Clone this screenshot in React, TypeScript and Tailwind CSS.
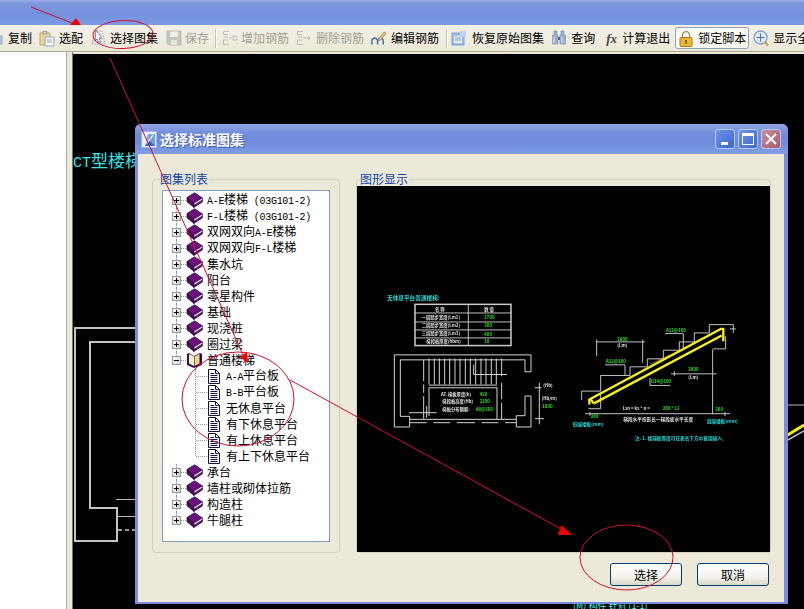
import React from "react";

const CJK = '"Noto Sans CJK SC"';

function Mixed({ text }: { text: string }) {
  const parts = text.split(/([\x00-\x7f]+)/).filter(Boolean);
  return (
    <span className="whitespace-nowrap">
      {parts.map((p, i) =>
        /^[\x00-\x7f]+$/.test(p) ? (
          <span key={i} className="font-['Liberation_Mono',monospace] text-[10px] tracking-[-0.3px] text-black">{p}</span>
        ) : (
          <span key={i}>{p}</span>
        )
      )}
    </span>
  );
}

function Book() {
  return (
    <svg width="17" height="16" viewBox="0 0 17 16">
      <path d="M1 5.5 L8.5 0.8 L16.5 6 L8 11.2 Z" fill="#6e0f80" stroke="#20062a" strokeWidth="0.7" />
      <path d="M1 5.5 L8 11.2 L8 15.5 L1 9.8 Z" fill="#4e0a5c" stroke="#20062a" strokeWidth="0.7" />
      <path d="M8 11.2 L16.5 6 L16.5 8 L8 13.4 Z" fill="#f4f4f4" stroke="#20062a" strokeWidth="0.5" />
      <path d="M8 13.4 L16.5 8 L16.5 10 L8 15.5 Z" fill="#6e0f80" stroke="#20062a" strokeWidth="0.5" />
    </svg>
  );
}

function OpenBook() {
  return (
    <svg width="17" height="17" viewBox="0 0 17 17">
      <path d="M1 2 L3 1 L8 4 L14 1 L16 2 L16 13 L8 16 L1 13 Z" fill="#3a0a50" />
      <path d="M3 2 L8 4.5 L8 14 L3 11.5 Z" fill="#f6f3c8" />
      <path d="M13.5 2 L8.6 4.5 L8.6 14 L13.5 11.5 Z" fill="#e8d98a" />
    </svg>
  );
}

function Doc() {
  return (
    <svg width="13" height="15" viewBox="0 0 13 15">
      <path d="M1.5 0.5 H8.5 L12.5 4.5 V14.5 H1.5 Z" fill="#fff" stroke="#101030" />
      <path d="M8.5 0.5 V4.5 H12.5" fill="none" stroke="#101030" />
      <path d="M3.5 4.5 H7 M3.5 6.5 H10.5 M3.5 8.5 H10.5 M3.5 10.5 H10.5 M3.5 12.5 H10.5" stroke="#101060" />
    </svg>
  );
}

function Expander({ minus }: { minus?: boolean }) {
  return (
    <span className="absolute left-[9px] top-[4px] z-10 flex h-[9px] w-[9px] items-center justify-center border border-[#8c9aa8] bg-[linear-gradient(135deg,#ffffff,#d8d4c8)]">
      <span className="absolute h-px w-[5px] bg-black" />
      {!minus && <span className="absolute h-[5px] w-px bg-black" />}
    </span>
  );
}

type Pos = "first" | "mid" | "last" | "open";

function TopRow({ text, pos, open }: { text: string; pos: Pos; open?: boolean }) {
  return (
    <div className="flex h-4 items-center text-[12px] leading-4 text-black">
      <div className="relative h-4 w-[23px] shrink-0">
        <span
          className={
            pos === "first"
              ? "absolute left-[13px] top-[8px] h-2 border-l border-dotted border-[#999]"
              : pos === "last" || pos === "open"
                ? "absolute left-[13px] top-0 h-2 border-l border-dotted border-[#999]"
                : "absolute left-[13px] top-0 h-4 border-l border-dotted border-[#999]"
          }
        />
        <span className="absolute left-[18px] top-[8px] w-[5px] border-t border-dotted border-[#999]" />
        <Expander minus={open} />
      </div>
      <div className="flex w-[17px] shrink-0 items-center justify-center">{open ? <OpenBook /> : <Book />}</div>
      <div className="ml-1">
        <Mixed text={text} />
      </div>
    </div>
  );
}

function ChildRow({ text, last }: { text: string; last?: boolean }) {
  return (
    <div className="flex h-4 items-center text-[12px] leading-4 text-black">
      <div className="relative h-4 w-[44px] shrink-0">
        <span className={last ? "absolute left-[32px] top-0 h-2 border-l border-dotted border-[#999]" : "absolute left-[32px] top-0 h-4 border-l border-dotted border-[#999]"} />
        <span className="absolute left-[33px] top-[8px] w-[11px] border-t border-dotted border-[#999]" />
      </div>
      <div className="flex w-[13px] shrink-0 items-center">
        <Doc />
      </div>
      <div className="ml-[6px]">
        <Mixed text={text} />
      </div>
    </div>
  );
}

/* ---------- toolbar icons ---------- */
const IcoCopy = () => (
  <svg width="16" height="16" viewBox="0 0 16 16">
    <path d="M8 6 H14 V14 H8 Z" fill="#dfe8f5" stroke="#7d9cc8" />
    <path d="M10 8 H13 M10 10 H13 M10 12 H13" stroke="#7d9cc8" />
  </svg>
);
const IcoPaste = () => (
  <svg width="16" height="17" viewBox="0 0 16 17">
    <path d="M1 3 H11 V15 H1 Z" fill="#ecd594" stroke="#c0a560" />
    <path d="M4 1.5 H8 V4 H4 Z" fill="#dcdfe6" stroke="#999" />
    <path d="M6 7 H15 V16 H6 Z" fill="#f8f9fc" stroke="#97a3bb" />
    <path d="M8 10 H13 M8 12 H13" stroke="#97a3bb" />
  </svg>
);
const IcoSelect = () => (
  <svg width="16" height="18" viewBox="0 0 16 18">
    <path d="M1 15 L4 2 H11 L14 15 Z" fill="#f0f1f5" stroke="#a0a7b8" strokeDasharray="1.5 1" />
    <path d="M3 10 H12 M4 6 H11 M2.5 13 H13" stroke="#a8b2c9" strokeDasharray="1.5 1" />
    <path d="M5 1 L11 9 L8 9 L10 13 L8 14 L6 10 L4 12 Z" fill="#fff" stroke="#667" strokeWidth="0.8" />
  </svg>
);
const IcoSave = () => (
  <svg width="16" height="16" viewBox="0 0 16 16">
    <path d="M1 1 H15 V15 H3 L1 13 Z" fill="#c6c6bf" stroke="#b8b8b0" />
    <path d="M4 1.5 H12 V7 H4 Z" fill="#f0f0ea" />
    <path d="M5 10 H11 V15 H5 Z" fill="#e6e6e0" />
  </svg>
);
const IcoRebar = ({ minus }: { minus?: boolean }) => (
  <svg width="16" height="16" viewBox="0 0 16 16">
    <path d="M7 1.5 H1.5 V4.5 H6 M1.5 7 H6 M6 10 H1.5 V14.5 H7" fill="none" stroke="#bbb" />
    {minus ? (
      <path d="M7 8 H14 M12 6.5 L14 8 L12 9.5" fill="none" stroke="#b4b4b4" />
    ) : (
      <path d="M7 8 H10 M11 6 H15 V10 H11 Z" fill="none" stroke="#bbb" />
    )}
  </svg>
);
const IcoEdit = () => (
  <svg width="17" height="16" viewBox="0 0 17 16">
    <path d="M1 15 V10 Q4 6 7 10 V15 M7 15 V10 Q10 6 13 10 V15" fill="none" stroke="#3c68b8" strokeWidth="1.5" />
    <path d="M8 9 L14 1.5 L16 3 L10 10.5 L7.5 11 Z" fill="#eac078" stroke="#8f7645" strokeWidth="0.7" />
  </svg>
);
const IcoRestore = () => (
  <svg width="16" height="16" viewBox="0 0 16 16">
    <path d="M1 3 H13 V15 H1 Z" fill="#9dbce6" stroke="#7f9fd0" />
    <path d="M3 6 H11 V13 H3 Z" fill="#e6eef9" />
    <path d="M4 8 H10 M4 10 H10" stroke="#7a9bd0" />
    <path d="M9 1 H15 V7 H9 Z" fill="#bcd2f0" />
  </svg>
);
const IcoBino = () => (
  <svg width="16" height="16" viewBox="0 0 16 16">
    <path d="M3 1 H6 V5 H7 V14 H1.5 V5 H3 Z" fill="#9ab0d0" stroke="#7a8dab" strokeWidth="0.6" />
    <path d="M10 1 H13 V5 H14.5 V14 H9 V5 H10 Z" fill="#9ab0d0" stroke="#7a8dab" strokeWidth="0.6" />
    <path d="M7 7 H9 V10 H7 Z" fill="#5c6678" />
    <path d="M3 7 V13 M11 7 V13" stroke="#e2e9f4" />
  </svg>
);
const IcoLock = () => (
  <svg width="14" height="17" viewBox="0 0 14 17">
    <path d="M3.5 8 V5 A3.5 3.5 0 0 1 10.5 5 V8" fill="none" stroke="#a89a70" strokeWidth="1.6" />
    <rect x="1" y="7.5" width="12" height="9" rx="1" fill="#edb73a" stroke="#a67a14" />
    <path d="M7 10 V14" stroke="#6a4a08" strokeWidth="1.4" />
  </svg>
);
const IcoZoom = () => (
  <svg width="16" height="17" viewBox="0 0 16 17">
    <circle cx="7.5" cy="7.5" r="6.5" fill="#dde7f6" stroke="#7f9ccc" strokeWidth="1.3" />
    <path d="M7.5 3.5 V11.5 M3.5 7.5 H11.5" stroke="#4f72b4" />
    <path d="M12 12 L15 15.5" stroke="#c29a4a" strokeWidth="2" />
  </svg>
);

function Tool({ icon, text, ml, gap, dim, w = 16 }: { icon: React.ReactNode; text: string; ml: string; gap: string; dim?: boolean; w?: number }) {
  return (
    <div className={`flex shrink-0 items-center ${ml} ${gap}`}>
      <div className="flex shrink-0 items-center justify-center" style={{ width: w }}>
        {icon}
      </div>
      <span className={dim ? "whitespace-nowrap text-[#a3a196]" : "whitespace-nowrap text-black"}>{text}</span>
    </div>
  );
}

function Sep({ ml }: { ml: string }) {
  return <div className={`${ml} h-[19px] w-[2px] shrink-0 border-l border-r border-l-[#c8c5b4] border-r-white`} />;
}

function WinBtn({ kind }: { kind: "min" | "max" | "close" }) {
  const bg =
    kind === "close"
      ? "bg-[linear-gradient(135deg,#c98a98,#a85a72)]"
      : "bg-[linear-gradient(135deg,#6f93e6,#3d66cf)]";
  return (
    <div className={`relative flex h-[20px] w-[20px] items-center justify-center rounded-[3px] border border-[#b9cdf2] ${bg}`}>
      {kind === "min" && <span className="mt-[8px] mr-[2px] h-[3px] w-[7px] bg-white" />}
      {kind === "max" && <span className="h-[12px] w-[12px] border border-t-[3px] border-white" />}
      {kind === "close" && (
        <svg width="12" height="12" viewBox="0 0 12 12">
          <path d="M1 1 L11 11 M11 1 L1 11" stroke="#fff" strokeWidth="2" />
        </svg>
      )}
    </div>
  );
}

function Backdrop() {
  return (
    <svg className="absolute inset-0 h-full w-full" viewBox="73 54 731 555" preserveAspectRatio="none">
      <g fill="none" stroke="#c4c4c4" strokeWidth="2">
        <path d="M140 328 H75 V541 H117 V508 H90 V342 H140" />
      </g>
      <path d="M116 499.5 H140 M117 516.5 H140" stroke="#bbb" />
      <path d="M118 530 H140" stroke="#ccc" strokeWidth="1.5" strokeDasharray="4 3" />
      <path d="M786 405 H804" stroke="#bbb" />
      <path d="M786 436 L804 425" stroke="#f5f010" strokeWidth="3" />
      <path d="M786 441 L804 431" stroke="#bbb" strokeWidth="1.5" />
      <text x="573" y="609" fontSize="9" fill="#3fe" fontFamily={CJK}>
        (M) 构件 针对 (1-1)
      </text>
    </svg>
  );
}

function Thumbnail() {
  const t = (x: number, y: number, s: string, c: string, size = 13) => (
    <text x={x} y={y} fontSize={size} fontWeight="700" fill={c} fontFamily={CJK}>
      {s}
    </text>
  );
  const stairs = [162, 178, 193, 209, 224, 240, 255, 271, 286, 302, 318, 333, 349, 364];
  const cyan = "#22d8d8";
  const green = "#22e022";
  const white = "#e0e0e0";
  return (
    <svg className="block h-full w-full blur-[0.4px]" viewBox="357 186 413 367" preserveAspectRatio="none">
      <g transform="translate(375 285) scale(0.3333)">
        {t(36, 45, "无休息平台普通楼梯:", cyan, 17)}
        <rect x="120" y="59" width="288" height="124" fill="none" stroke="#ccc" strokeWidth="4.5" />
        <path d="M120 85 H408 M120 112 H408 M120 136 H408 M120 160 H408 M280 59 V183" stroke="#ddd" strokeWidth="2.6" />
        {t(180, 80, "名  称", white)}
        {t(328, 80, "数  值", white)}
        {t(140, 102, "一层踏步宽度(Lm1)", white)}
        {t(328, 104, "2700", green)}
        {t(140, 128, "二层踏步宽度(Lm2)", white)}
        {t(328, 126, "300", green)}
        {t(140, 152, "三层踏步宽度(Lm3)", white)}
        {t(328, 153, "400", green)}
        {t(154, 176, "梯段板厚度(hbm)", white)}
        {t(328, 174, "18", green)}

        <g fill="none" stroke="#d4d4d4" strokeWidth="3">
          <path d="M450 262 H468 V211 H58 V428 H104 V396 H76 V226 H450 V262" />
          <path d="M450 335 H468 V428 H424 V394 H450 V335" />
          <path d="M104 405 H424" />
          <path d="M104 415 H155 M175 415 H225 M245 415 H300 M320 415 H370 M390 415 H424" />
          <path d="M146 226 V290 M146 300 V325 M146 335 V403" />
          <path d="M162 302 H366 M162 310 H366 M162 310 V395 M366 310 V405" />
          <path d="M380 222 V275 M380 295 V345 M380 355 V405" />
          <path d="M296 240 V270 M296 270 H396 M102 385 H185 M155 365 V400" />
          <path d="M493 295 V420 M480 310 H500 M480 403 H507" />
          {stairs.map((x) => (
            <path key={x} d={`M${x} 222 V300`} />
          ))}
        </g>
        {t(198, 336, "AT. 梯板厚度(h)", white)}
        {t(314, 336, "420", green)}
        {t(202, 357, "梯段板高度(Hb)", white)}
        {t(314, 357, "2100", green)}
        {t(202, 381, "梯板分布钢筋:", white)}
        {t(302, 381, "A8@200", green)}
        {t(505, 307, "(Hb)", white)}
        {t(500, 347, "(Hb/m)", white)}
        {t(502, 372, "1800", green)}
      </g>
      <g transform="translate(570 310) scale(0.3333)">
        <g fill="none" stroke="#d0d0d0" strokeWidth="2.8">
          <path d="M35 245 H92 V198 H135 V198 H180 V172 H232 V148 H280 V122 H328 V97 H373 V70 H418 V45 H490 V70" />
          <path d="M35 245 V272 M55 298 H92 V255 M428 118 H467 V80 M428 120 V315" />
          <path d="M80 90 V140 M218 90 V160 M80 97 H225" />
          <path d="M105 166 H165 V198 M285 72 H340 V120 M240 205 V228 H300" />
          <path d="M303 193 H440 M313 185 V200 M45 313 H480 M60 308 V320 M465 308 V320 M480 58 H498" />
          <path d="M240 165 L300 135" strokeWidth="1.4" />
        </g>
        <g fill="none" stroke="#f6f21a" strokeWidth="7" strokeLinejoin="round">
          <path d="M58 285 V270 L452 58 H460 V95" />
          <path d="M72 282 L455 78" />
          <path d="M72 282 L62 270" />
        </g>
        {t(142, 93, "2800", green)}
        {t(142, 112, "(Lm)", white)}
        {t(108, 160, "A12@100", green)}
        {t(288, 66, "A12@100", green)}
        {t(243, 221, "D14@100", green)}
        {t(355, 186, "2800", green)}
        {t(355, 208, "(Lm)", white)}
        {t(158, 302, "Lsn = ks * n = ", white)}
        {t(278, 302, "280 * 12", green)}
        {t(62, 327, "280", green)}
        {t(436, 305, "280", green)}
        {t(160, 335, "梯段水平投影长一梯段底水平长度", white, 14)}
        {t(8, 349, "低端楼板(mm)", cyan, 14)}
        {t(410, 342, "高端楼板(mm)", cyan, 14)}
        {t(195, 392, "注: 1. 楼梯板厚度可在表名下方中直接输入。", cyan, 14)}
      </g>
    </svg>
  );
}

function DialogButton({ text }: { text: string }) {
  return (
    <button className="flex h-[23px] w-[72px] items-center justify-center rounded-[3px] border border-[#003c74] bg-[linear-gradient(to_bottom,#ffffff,#f4f3ee_60%,#dcd8c8)] text-[12px] text-black">
      {text}
    </button>
  );
}

function Dialog() {
  return (
    <div className="absolute left-[135px] top-[124px] flex h-[480px] w-[653px] flex-col overflow-hidden rounded-t-[6px] bg-[#7b8cde]">
      <div className="flex h-[30px] shrink-0 items-center bg-[linear-gradient(to_bottom,#8ea3e4,#6f8cda_35%,#6f8cda_65%,#7f9fe9)] pl-[6px] pr-[7px]">
        <svg width="16" height="17" viewBox="0 0 16 17">
          <rect x="1" y="1" width="14" height="15" fill="#eef3fb" stroke="#d6e0f2" />
          <path d="M4 15 L7 3 H14 V15 Z" fill="#6fa3e4" />
          <path d="M4 15 L9 10 L14 15 Z" fill="#2f6ab4" />
          <path d="M5 12 Q9 9 12 4" fill="none" stroke="#fff" strokeWidth="1.2" />
        </svg>
        <span className="ml-[3px] text-[14px] font-bold text-white [text-shadow:1px_1px_0_#4a5fa8]">选择标准图集</span>
        <div className="ml-auto flex gap-[3px]">
          <WinBtn kind="min" />
          <WinBtn kind="max" />
          <WinBtn kind="close" />
        </div>
      </div>
      <div className="ml-[3px] mr-[4px] mb-[2px] flex min-h-0 flex-1 flex-col bg-[#ece9d8] pl-[14px] pr-[13px] pt-[25px]">
        <div className="flex h-[374px] shrink-0 gap-[16px]">
          <div className="relative w-[188px] shrink-0 rounded-[4px] border border-[#d0cebc] px-[9px] pb-[10px] pt-[10px]">
            <span className="absolute left-[7px] top-[-8px] bg-[#ece9d8] pr-[1px] text-[12px] leading-[14px] text-[#0f47a8]">图集列表</span>
            <div className="h-full border border-[#7f9db9] bg-white pt-px">
              <TopRow text="A-E楼梯 (03G101-2)" pos="first" />
              <TopRow text="F-L楼梯 (03G101-2)" pos="mid" />
              <TopRow text="双网双向A-E楼梯" pos="mid" />
              <TopRow text="双网双向F-L楼梯" pos="mid" />
              <TopRow text="集水坑" pos="mid" />
              <TopRow text="阳台" pos="mid" />
              <TopRow text="零星构件" pos="mid" />
              <TopRow text="基础" pos="mid" />
              <TopRow text="现浇桩" pos="mid" />
              <TopRow text="圈过梁" pos="mid" />
              <TopRow text="普通楼梯" pos="open" open />
              <ChildRow text="A-A平台板" />
              <ChildRow text="B-B平台板" />
              <ChildRow text="无休息平台" />
              <ChildRow text="有下休息平台" />
              <ChildRow text="有上休息平台" />
              <ChildRow text="有上下休息平台" last />
              <TopRow text="承台" pos="mid" />
              <TopRow text="墙柱或砌体拉筋" pos="mid" />
              <TopRow text="构造柱" pos="mid" />
              <TopRow text="牛腿柱" pos="last" />
            </div>
          </div>
          <div className="relative flex w-[415px] shrink-0 flex-col rounded-[4px] border border-[#d0cebc] pt-[6px]">
            <span className="absolute left-[3px] top-[-8px] bg-[#ece9d8] pr-[1px] text-[12px] leading-[14px] text-[#0f47a8]">图形显示</span>
            <div className="min-h-0 flex-1 bg-black">
              <Thumbnail />
            </div>
          </div>
        </div>
        <div className="mt-[10px] flex justify-end gap-[15px] pr-[2px]">
          <DialogButton text="选择" />
          <DialogButton text="取消" />
        </div>
      </div>
    </div>
  );
}

function Annotations() {
  const c = "#d01030";
  return (
    <svg className="pointer-events-none absolute inset-0 z-50" width="804" height="609" viewBox="0 0 804 609">
      <g fill="none" stroke={c} strokeWidth="1">
        <path d="M31 7 L72 23" />
        <ellipse cx="123" cy="34.5" rx="30" ry="14" transform="rotate(-2 123 34.5)" />
        <path d="M110 58 L243 355" />
        <ellipse cx="238" cy="399" rx="56" ry="47" />
        <path d="M290 380 L563 530" />
        <ellipse cx="626.5" cy="557.5" rx="46.5" ry="32.5" />
      </g>
      <path d="M76 18 L70 25 L81 25 Z" fill="#f00000" />
      <path d="M240 357 L247 352 L248 363 Z" fill="#f00000" />
      <path d="M561 525 L558 535 L572 535 Z" fill="#f00000" />
    </svg>
  );
}

export default function App() {
  return (
    <div className="relative flex h-[609px] w-[804px] flex-col overflow-hidden bg-[#ece9d8] font-['Noto_Sans_CJK_SC',sans-serif]">
      <div className="h-[25px] shrink-0 bg-[linear-gradient(to_bottom,#9aace6,#7f98de_12%,#7391dc_55%,#7b9ae4)]" />
      <div className="flex h-[26px] shrink-0 items-center overflow-hidden bg-[linear-gradient(to_bottom,#f4f2e8,#ece9d8)] text-[12px]">
        <Tool ml="-ml-[12px]" gap="gap-[4px]" icon={<IcoCopy />} text="复制" />
        <Tool ml="ml-[7px]" gap="gap-[4px]" icon={<IcoPaste />} text="选配" />
        <Tool ml="ml-[8px]" gap="gap-[3px]" icon={<IcoSelect />} text="选择图集" />
        <Tool ml="ml-[8px]" gap="gap-[3px]" icon={<IcoSave />} text="保存" dim />
        <Sep ml="ml-[6px]" />
        <Tool ml="ml-[5px]" gap="gap-[3px]" icon={<IcoRebar />} text="增加钢筋" dim />
        <Tool ml="ml-[7px]" gap="gap-[4px]" icon={<IcoRebar minus />} text="删除钢筋" dim />
        <Tool ml="ml-[7px]" gap="gap-[4px]" icon={<IcoEdit />} text="编辑钢筋" />
        <Sep ml="ml-[7px]" />
        <Tool ml="ml-[3px]" gap="gap-[5px]" icon={<IcoRestore />} text="恢复原始图集" />
        <Tool ml="ml-[7px]" gap="gap-[4px]" icon={<IcoBino />} text="查询" />
        <Tool
          ml="ml-[9px]"
          gap="gap-[3px]"
          w={15}
          icon={<span className="font-['Liberation_Serif',serif] text-[13px] italic leading-none text-[#444] font-bold">fx</span>}
          text="计算退出"
        />
        <div className="ml-[5px] flex h-[22px] w-[74px] shrink-0 items-center gap-[5px] rounded-[3px] border border-[#8ea2bd] bg-[#fbfbf6] pl-[3px]">
          <IcoLock />
          <span className="whitespace-nowrap text-black">锁定脚本</span>
        </div>
        <Tool ml="ml-[4px]" gap="gap-[4px]" icon={<IcoZoom />} text="显示全" />
      </div>
      <div className="h-[1px] shrink-0 bg-[#aca899]" />
      <div className="flex min-h-0 flex-1">
        <div className="mt-0 w-[66px] shrink-0 bg-white" />
        <div className="w-[7px] shrink-0 border-l border-r border-l-[#aaa89a] border-r-[#77756a] bg-[#ece9d8]" />
        <div className="relative mt-[2px] min-w-0 flex-1 bg-black">
          <Backdrop />
          <div className="absolute left-0 top-[99px] whitespace-nowrap font-['Liberation_Mono','Noto_Sans_CJK_SC',monospace] text-[17px] leading-5 text-[#2fe8e8]">
            <span className="text-[15px]">CT</span>型楼梯
          </div>
        </div>
      </div>
      <Dialog />
      <Annotations />
    </div>
  );
}
